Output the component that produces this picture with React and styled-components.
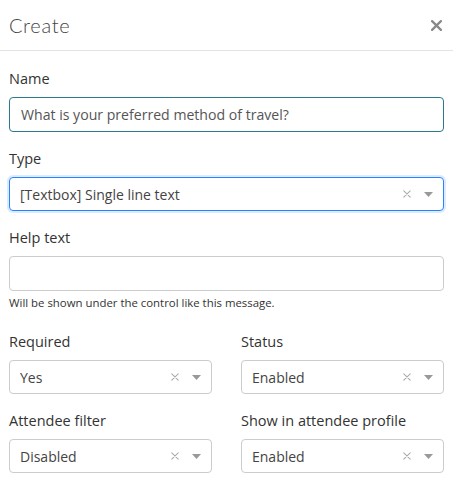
import React from 'react';
import styled, { createGlobalStyle } from 'styled-components';

const GlobalStyle = createGlobalStyle`
  body {
    margin: 0;
    background: #fff;
    font-family: "Open Sans", "Liberation Sans", sans-serif;
    color: #333;
  }
`;

const Modal = styled.div`
  width: 453px;
  background: #fff;
`;

const Header = styled.div`
  display: flex;
  align-items: center;
  justify-content: space-between;
  height: 50px;
  padding: 0 10px 0 9px;
  border-bottom: 1px solid #e3e3e3;
`;

const Title = styled.h2`
  margin: 0;
  font-family: "Lato", "Open Sans", sans-serif;
  font-weight: 300;
  font-size: 20px;
  letter-spacing: 0.7px;
  color: #444;
`;

const CloseButton = styled.button`
  border: 0;
  background: none;
  padding: 0;
  width: 14px;
  height: 14px;
  display: flex;
  align-items: center;
  justify-content: center;
  cursor: pointer;
`;

const Body = styled.div`
  padding: 17px 9px 0;
`;

const Field = styled.div`
  display: flex;
  flex-direction: column;
  margin-bottom: ${({ $gap }) => $gap ?? 16}px;
`;

const Label = styled.label`
  font-size: 14.5px;
  line-height: 21px;
  color: #333;
  margin-bottom: 8px;
`;

const TextInput = styled.div`
  box-sizing: border-box;
  height: ${({ $h }) => $h ?? 35}px;
  border: 1px solid ${({ $focus }) => ($focus ? '#2b7a8c' : '#ccc')};
  border-radius: 4px;
  padding: 0 11px;
  display: flex;
  align-items: center;
  font-size: 14.1px;
  color: #555;
`;

const SelectBox = styled.div`
  box-sizing: border-box;
  height: 34px;
  border: 1px solid ${({ $focus }) => ($focus ? '#2684ff' : '#ccc')};
  box-shadow: ${({ $focus }) => ($focus ? '0 0 0 2px #dcebff' : 'none')};
  border-radius: 4px;
  padding: 0 10px 0 10px;
  display: flex;
  align-items: center;
  font-size: 14px;
  color: #444;
`;

const Value = styled.span`
  flex: 1;
  white-space: nowrap;
  overflow: hidden;
`;

const Indicators = styled.span`
  display: flex;
  align-items: center;
  gap: 13px;
  color: #aaa;
`;

const Hint = styled.div`
  margin-top: 4px;
  font-size: 11.4px;
  line-height: 15px;
  color: #333;
`;

const Row = styled.div`
  display: grid;
  grid-template-columns: 1fr 1fr;
  column-gap: 29px;
`;

const Cross = ({ size = 8, color = '#aaa', stroke = 1.3 }) => (
  <svg width={size} height={size} viewBox="0 0 10 10">
    <path d="M1 1L9 9M9 1L1 9" stroke={color} strokeWidth={stroke} strokeLinecap="round" />
  </svg>
);

const Caret = () => (
  <svg width="9" height="5" viewBox="0 0 9 5">
    <path d="M0 0H9L4.5 5Z" fill="#999" />
  </svg>
);

const Select = ({ value, focus }) => (
  <SelectBox $focus={focus}>
    <Value>{value}</Value>
    <Indicators>
      <Cross />
      <Caret />
    </Indicators>
  </SelectBox>
);

export default function App() {
  return (
    <>
      <GlobalStyle />
      <Modal>
        <Header>
          <Title>Create</Title>
          <CloseButton aria-label="Close">
            <Cross size={11} color="#888" stroke={2} />
          </CloseButton>
        </Header>
        <Body>
          <Field>
            <Label>Name</Label>
            <TextInput $focus>What is your preferred method of travel?</TextInput>
          </Field>
          <Field>
            <Label>Type</Label>
            <Select value="[Textbox] Single line text" focus />
          </Field>
          <Field $gap={21}>
            <Label>Help text</Label>
            <TextInput />
            <Hint>Will be shown under the control like this message.</Hint>
          </Field>
          <Row>
            <Field>
              <Label>Required</Label>
              <Select value="Yes" />
            </Field>
            <Field>
              <Label>Status</Label>
              <Select value="Enabled" />
            </Field>
            <Field>
              <Label>Attendee filter</Label>
              <Select value="Disabled" />
            </Field>
            <Field>
              <Label>Show in attendee profile</Label>
              <Select value="Enabled" />
            </Field>
          </Row>
        </Body>
      </Modal>
    </>
  );
}
